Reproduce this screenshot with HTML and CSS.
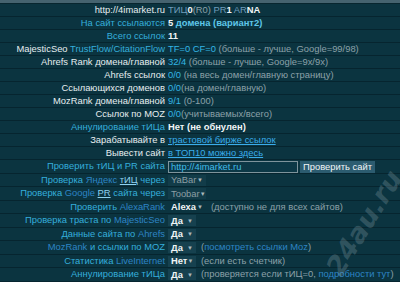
FILE: index.html
```html
<!DOCTYPE html>
<html lang="ru">
<head>
<meta charset="utf-8">
<title>Проверка сайта</title>
<link rel="stylesheet" href="styles.css">
</head>
<body>
<div class="page">
  <div class="topbar"></div>
  <div class="tbl">
    <div class="row"><div class="lbl">http://4imarket.ru</div><div class="val"><span class="mut">ТИЦ</span><b class="w">0</b><span class="gr">(R0)</span> <span class="mut">PR</span><b class="w">1</b> <span class="mut">AR</span><b class="w">NA</b></div></div>
    <div class="row"><div class="lbl c">На сайт ссылаются</div><div class="val"><b class="w">5</b> <b class="cb">домена (вариант2)</b></div></div>
    <div class="row"><div class="lbl c">Всего ссылок</div><div class="val"><b class="w">11</b></div></div>
    <div class="row"><div class="lbl">MajesticSeo <span class="c">TrustFlow/CitationFlow</span></div><div class="val"><span class="cv">TF=0 CF=0</span> <span class="gr">(больше - лучше, Google=99/98)</span></div></div>
    <div class="row"><div class="lbl">Ahrefs Rank домена/главной</div><div class="val"><span class="cv">32/4</span> <span class="gr">(больше - лучше, Google=9x/9x)</span></div></div>
    <div class="row"><div class="lbl">Ahrefs ссылок</div><div class="val"><span class="cv">0/0</span> <span class="gr">(на весь домен/главную страницу)</span></div></div>
    <div class="row"><div class="lbl">Ссылающихся доменов</div><div class="val"><span class="cv">0/0</span><span class="gr">(на домен/главную)</span></div></div>
    <div class="row"><div class="lbl">MozRank домена/главной</div><div class="val"><span class="cv">9/1</span> <span class="gr">(0-100)</span></div></div>
    <div class="row"><div class="lbl">Ссылок по MOZ</div><div class="val"><span class="cv">0/0</span><span class="gr">(учитываемых/всего)</span></div></div>
    <div class="row"><div class="lbl c">Аннулирование тИЦа</div><div class="val"><b class="w">Нет (не обнулен)</b></div></div>
    <div class="row"><div class="lbl">Зарабатывайте в</div><div class="val"><a class="lnk" href="#">трастовой бирже ссылок</a></div></div>
    <div class="row"><div class="lbl">Вывести сайт</div><div class="val"><a class="lnk" href="#">в ТОП10 можно здесь</a></div></div>
    <div class="row tall"><div class="lbl c">Проверить тИЦ и PR сайта</div><div class="val"><span class="inp">http://4imarket.ru</span><span class="btn">Проверить сайт</span></div></div>
    <div class="row tall"><div class="lbl c">Проверка <span class="b">Яндекс</span> <u class="lt">тИЦ</u> через</div><div class="val"><span class="sel dis">YaBar<i class="arr">▼</i></span></div></div>
    <div class="row tall"><div class="lbl c">Проверка <span class="b">Google</span> <u class="lt">PR</u> сайта через</div><div class="val"><span class="sel dis">Toobar<i class="arr">▼</i></span></div></div>
    <div class="row tall"><div class="lbl c">Проверить <span class="b">AlexaRank</span></div><div class="val"><span class="sel wide"><b class="w">Alexa</b><i class="arr">▼</i></span><span class="gr note">(доступно не для всех сайтов)</span></div></div>
    <div class="row tall"><div class="lbl c">Проверка траста по <span class="b">MajesticSeo</span></div><div class="val"><span class="sel"><b class="w">Да</b><i class="arr">▼</i></span></div></div>
    <div class="row tall"><div class="lbl c">Данные сайта по <span class="b">Ahrefs</span></div><div class="val"><span class="sel"><b class="w">Да</b><i class="arr">▼</i></span></div></div>
    <div class="row tall"><div class="lbl c"><span class="b">MozRank</span> и ссылки по MOZ</div><div class="val"><span class="sel"><b class="w">Да</b><i class="arr">▼</i></span><span class="gr note">(<span class="b">посмотреть ссылки Moz</span>)</span></div></div>
    <div class="row tall"><div class="lbl c">Статистика <span class="b">LiveInternet</span></div><div class="val"><span class="sel"><b class="w">Нет</b><i class="arr">▼</i></span><span class="gr note">(если есть счетчик)</span></div></div>
    <div class="row tall"><div class="lbl c">Аннулирование тИЦа</div><div class="val"><span class="sel"><b class="w">Да</b><i class="arr">▼</i></span><span class="gr note">(проверяется если тИЦ=0, <span class="b">подробности тут</span>)</span></div></div>
  </div>
  <div class="wm">24au.ru</div>
</div>
</body>
</html>
```

FILE: styles.css
```css
html, body {
  margin: 0;
  padding: 0;
  background: #0b3440;
}
.page {
  position: relative;
  width: 400px;
  height: 282px;
  overflow: hidden;
  background: #0b3440;
  font-family: "Liberation Sans", Arial, sans-serif;
  font-size: 9.4px;
  color: #dfe7ea;
}
.topbar {
  height: 3px;
  background: #45636f;
  border-bottom: 1px solid #08262f;
}
.row {
  display: grid;
  grid-template-columns: 165px 1fr;
  column-gap: 3px;
  height: 12px;
  border-bottom: 1px solid #06252f;
  align-items: center;
  white-space: nowrap;
}
.row.tall {
  height: 12.5px;
}
.lbl {
  text-align: right;
  color: #e6edef;
  line-height: 12px;
}
.val {
  line-height: 12px;
  color: #dfe7ea;
}
.c { color: #35aedb; }
.b { color: #2d84c4; }
.lt { color: #8fd2ef; text-decoration: underline; }
.w { color: #f1f5f6; font-weight: bold; }
.cb { color: #5ec6e8; font-weight: bold; }
.cv { color: #33b6e6; }
.gr { color: #8ba1a9; }
.mut { color: #6f9cbc; }
.lnk { color: #3aacea; text-decoration: underline; }
.note { margin-left: 5px; }
.inp {
  display: inline-block;
  vertical-align: middle;
  box-sizing: border-box;
  width: 130px;
  height: 12px;
  line-height: 10px;
  padding-left: 2px;
  border: 1px solid #7e949c;
  background: #0c3846;
  color: #40bde8;
}
.btn {
  display: inline-block;
  vertical-align: middle;
  margin-left: 2px;
  height: 12px;
  line-height: 12px;
  padding: 0 3px;
  background: #2c5c70;
  color: #f0f5f7;
}
.sel {
  box-sizing: border-box;
  display: inline-flex;
  vertical-align: middle;
  align-items: center;
  width: 28px;
  height: 11px;
  padding: 0 3px;
  background: #16414f;
}
.sel.dis {
  width: 38px;
  color: #8b9ea4;
  background: #123c49;
}
.sel.wide {
  width: 38px;
  background: #0b3440;
}
.arr {
  margin-left: auto;
  font-style: normal;
  font-size: 6px;
  line-height: 6px;
  color: #a9b8bd;
}
.wm {
  position: absolute;
  left: 333px;
  top: 258px;
  height: 30px;
  line-height: 30px;
  font-family: "DejaVu Sans", sans-serif;
  font-size: 27px;
  font-weight: bold;
  font-style: italic;
  color: rgba(205, 220, 225, 0.2);
  transform: rotate(-58deg);
  transform-origin: 0 50%;
  white-space: nowrap;
}
```
